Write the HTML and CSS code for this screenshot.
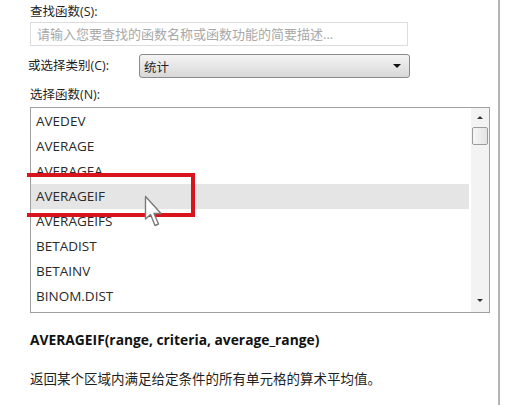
FILE: index.html
```html
<!DOCTYPE html>
<html lang="zh-CN">
<head>
<meta charset="utf-8">
<link rel="stylesheet" href="styles.css">
</head>
<body>
<div class="dialog">
  <div class="content">
    <div class="label first">查找函数(S):</div>
    <div class="search">请输入您要查找的函数名称或函数功能的简要描述...</div>
    <div class="cat-row">
      <span class="label">或选择类别(C):</span>
      <div class="select"><span>统计</span><span class="arrow"></span></div>
    </div>
    <div class="label third">选择函数(N):</div>
    <div class="list">
      <div class="items">
        <div class="item">AVEDEV</div>
        <div class="item">AVERAGE</div>
        <div class="item">AVERAGEA</div>
        <div class="item sel">AVERAGEIF</div>
        <div class="item">AVERAGEIFS</div>
        <div class="item">BETADIST</div>
        <div class="item">BETAINV</div>
        <div class="item">BINOM.DIST</div>
      </div>
      <div class="scrollbar">
        <span class="up"></span>
        <span class="thumb"></span>
        <span class="spacer"></span>
        <span class="down"></span>
      </div>
    </div>
    <div class="syntax">AVERAGEIF(range, criteria, average_range)</div>
    <div class="desc">返回某个区域内满足给定条件的所有单元格的算术平均值。</div>
  </div>
  <div class="redbox"></div>
  <svg class="cursor" width="20" height="34" viewBox="0 0 20 34">
    <path d="M1.5 1.5 L1.5 24 L6.5 19.5 L11 30.5 L14.5 29 L10 18.5 L17 18.5 Z" fill="#ffffff" stroke="#7a7a7a" stroke-width="1.4" stroke-linejoin="round"/>
  </svg>
</div>
</body>
</html>
```

FILE: styles.css
```css
html, body {
  margin: 0;
  padding: 0;
  background: #ffffff;
}
body {
  font-family: "Open Sans", "Noto Sans CJK SC", sans-serif;
  color: #1f1f1f;
  font-size: 13px;
}
.dialog {
  position: relative;
  width: 498px;
  height: 405px;
  border-right: 2px solid #b4b4b4;
  overflow: hidden;
}
.content {
  padding-left: 30px;
  display: flex;
  flex-direction: column;
}
.label {
  line-height: 16px;
  font-size: 12.5px;
}
.first {
  margin-top: 4px;
}
.search {
  margin-top: 2px;
  height: 22px;
  border: 1px solid #dcdcdc;
  color: #a8a8a8;
  font-size: 13px;
  line-height: 22px;
  padding-left: 6px;
  box-sizing: content-box;
  width: 370px;
}
.cat-row {
  margin-top: 8px;
  display: flex;
  align-items: center;
  margin-left: -2px;
}
.cat-row .label {
  width: 111px;
}
.select {
  height: 22px;
  border: 1px solid #8a8a8a;
  border-radius: 3px;
  background: linear-gradient(#f4f4f4, #e6e6e6 50%, #d8d8d8);
  display: flex;
  align-items: center;
  justify-content: space-between;
  padding: 0 8px 0 4px;
  box-sizing: content-box;
  width: 257px;
  font-size: 12.5px;
}
.arrow {
  width: 0;
  height: 0;
  border-left: 4px solid transparent;
  border-right: 4px solid transparent;
  border-top: 4px solid #111;
}
.third {
  margin-top: 9px;
}
.list {
  margin-top: 4px;
  width: 458px;
  height: 204px;
  border: 1px solid #a0a0a0;
  display: flex;
  color: #2a2a2a;
}
.items {
  flex: 1;
  padding-top: 1px;
}
.item {
  height: 25px;
  line-height: 25px;
  padding-left: 5px;
  font-size: 13.5px;
}
.item.sel {
  background: #e5e5e5;
}
.scrollbar {
  width: 18px;
  margin-left: 2px;
  background: #f3f3f3;
  display: flex;
  flex-direction: column;
  align-items: center;
}
.up, .down {
  width: 0;
  height: 0;
  border-left: 3px solid transparent;
  border-right: 3px solid transparent;
}
.up {
  margin-top: 8px;
  border-bottom: 3px solid #333;
}
.thumb {
  margin-top: 8px;
  width: 14px;
  height: 16px;
  border: 1px solid #9c9c9c;
  border-radius: 2px;
  background: linear-gradient(90deg, #f6f6f6, #e4e4e4);
}
.spacer {
  flex: 1;
}
.down {
  margin-bottom: 10px;
  border-top: 3px solid #333;
}
.syntax {
  margin-top: 18px;
  font-weight: 700;
  font-size: 13.8px;
  line-height: 18px;
  color: #111;
}
.desc {
  margin-top: 21px;
  font-size: 13.5px;
  line-height: 18px;
}
.redbox {
  position: absolute;
  left: 27px;
  top: 173px;
  width: 164px;
  height: 36px;
  border: 4px solid #d8141c;
  border-left: none;
}
.cursor {
  position: absolute;
  left: 144px;
  top: 195px;
}
```
